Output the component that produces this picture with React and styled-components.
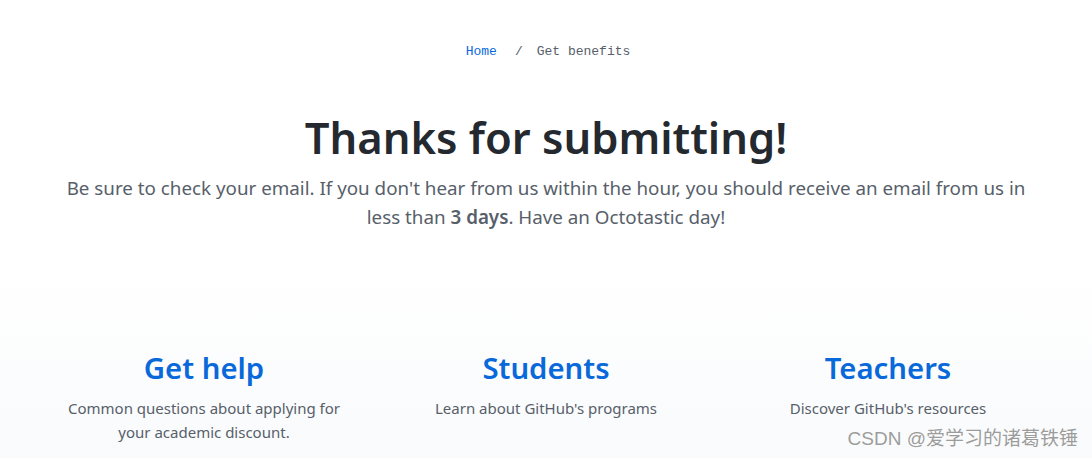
import styled, { createGlobalStyle } from 'styled-components'

const GlobalStyle = createGlobalStyle`
    body {
        margin: 0;
        background: #fff;
        font-family: "Noto Sans", "Liberation Sans", sans-serif;
    }
`

const columns = [
    { title: 'Get help', text: 'Common questions about applying for your academic discount.' },
    { title: 'Students', text: "Learn about GitHub's programs" },
    { title: 'Teachers', text: "Discover GitHub's resources" },
]

const App = () => {
    return (
        <Page>
            <GlobalStyle />
            <Hero>
                <Breadcrumb>
                    <Crumb href="#">Home</Crumb>
                    <Divider>/</Divider>
                    <Current>Get benefits</Current>
                </Breadcrumb>
                <Title>Thanks for submitting!</Title>
                <Lead>
                    Be sure to check your email. If you don't hear from us within the hour, you should receive an email from us in less than <Strong>3 days</Strong>. Have an Octotastic day!
                </Lead>
            </Hero>
            <Links>
                {columns.map(c => (
                    <Column key={c.title}>
                        <ColumnTitle href="#">{c.title}</ColumnTitle>
                        <ColumnText>{c.text}</ColumnText>
                    </Column>
                ))}
            </Links>
            <Watermark>CSDN @爱学习的诸葛铁锤</Watermark>
        </Page>
    )
}

export default App

const Page = styled.div`
    position: relative;
    width: 1092px;
    height: 458px;
    overflow: hidden;
`

const Hero = styled.div`
    display: flex;
    flex-direction: column;
    align-items: center;
    padding-top: 43px;
`

const Breadcrumb = styled.nav`
    display: flex;
    align-items: center;
    gap: 14px;
    margin-left: 4px;
    font-family: "Liberation Mono", "DejaVu Sans Mono", monospace;
    font-size: 13px;
    line-height: 18px;
`

const Crumb = styled.a`
    color: #0969da;
    text-decoration: none;
    margin-right: 4px;
`

const Divider = styled.span`
    color: #57606a;
`

const Current = styled.span`
    color: #57606a;
`

const Title = styled.h1`
    margin: 47px 0 0;
    font-size: 43.5px;
    line-height: 58px;
    font-weight: 600;
    color: #24292f;
`

const Lead = styled.p`
    margin: 8px 0 0;
    max-width: 980px;
    text-align: center;
    font-size: 18.8px;
    line-height: 29px;
    color: #57606a;
`

const Strong = styled.strong`
    font-weight: 600;
`

const Links = styled.div`
    display: grid;
    grid-template-columns: repeat(3, 342px);
    justify-content: center;
    margin-top: 40px;
    padding-top: 76px;
    height: 300px;
    background: linear-gradient(180deg, #ffffff 0%, #f6f8fa 70%);
`

const Column = styled.div`
    display: flex;
    flex-direction: column;
    align-items: center;
    text-align: center;
    padding: 0 30px;
`

const ColumnTitle = styled.a`
    font-size: 29.3px;
    line-height: 40px;
    font-weight: 600;
    color: #0969da;
    text-decoration: none;
`

const ColumnText = styled.p`
    margin: 8px 0 0;
    font-size: 15px;
    line-height: 24px;
    color: #57606a;
    max-width: 290px;
`

const Watermark = styled.div`
    position: absolute;
    right: 14px;
    bottom: 8px;
    font-family: "Liberation Sans", "Noto Sans CJK SC", sans-serif;
    font-size: 19px;
    color: #9c9c9c;
    text-shadow: 0 0 2px #fff;
`
